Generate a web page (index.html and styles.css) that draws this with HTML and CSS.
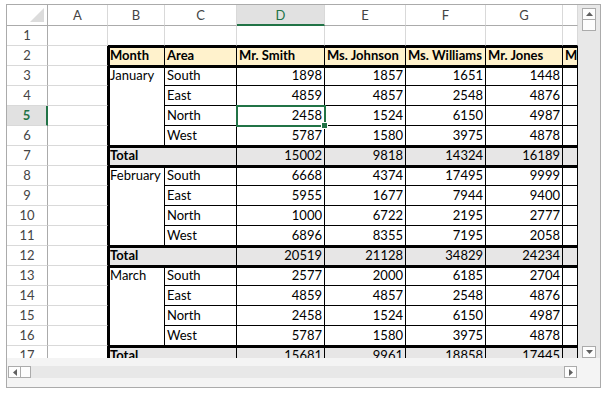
FILE: index.html
```html
<!DOCTYPE html>
<html>
<head>
<meta charset="utf-8">
<title>Sheet</title>
<link rel="stylesheet" href="styles.css">
</head>
<body>
<div class="frame">
  <div class="sheet">
    <div class="corner"><svg width="16" height="16" viewBox="0 0 16 16"><polygon points="15,1 15,15 1,15" fill="#dcdcdc"/></svg></div>
    <div class="ch">A</div><div class="ch">B</div><div class="ch">C</div><div class="ch sel">D</div><div class="ch">E</div><div class="ch">F</div><div class="ch">G</div><div class="ch"></div>

    <div class="rh">1</div><div></div><div class="ab"></div><div class="ab"></div><div class="ab"></div><div class="ab"></div><div class="ab"></div><div class="ab"></div><div class="ab"></div>

    <div class="rh">2</div><div class="lf"></div><div class="t hd tt tl">Month</div><div class="t hd tt">Area</div><div class="t hd tt">Mr. Smith</div><div class="t hd tt">Ms. Johnson</div><div class="t hd tt">Ms. Williams</div><div class="t hd tt">Mr. Jones</div><div class="t hd tt">M</div>

    <div class="rh">3</div><div class="lf"></div><div class="t tt tl m">January</div><div class="t tt">South</div><div class="t tt n">1898</div><div class="t tt n">1857</div><div class="t tt n">1651</div><div class="t tt n">1448</div><div class="t tt"></div>
    <div class="rh">4</div><div class="lf"></div><div class="t">East</div><div class="t n">4859</div><div class="t n">4857</div><div class="t n">2548</div><div class="t n">4876</div><div class="t"></div>
    <div class="rh sel">5</div><div class="lf"></div><div class="t">North</div><div class="t n cur">2458</div><div class="t n">1524</div><div class="t n">6150</div><div class="t n">4987</div><div class="t"></div>
    <div class="rh">6</div><div class="lf"></div><div class="t">West</div><div class="t n">5787</div><div class="t n">1580</div><div class="t n">3975</div><div class="t n">4878</div><div class="t"></div>
    <div class="rh">7</div><div class="lf"></div><div class="t tot tt tl span2 lbl">Total</div><div class="t tot tt n">15002</div><div class="t tot tt n">9818</div><div class="t tot tt n">14324</div><div class="t tot tt n">16189</div><div class="t tot tt"></div>

    <div class="rh">8</div><div class="lf"></div><div class="t tt tl m">February</div><div class="t tt">South</div><div class="t tt n">6668</div><div class="t tt n">4374</div><div class="t tt n">17495</div><div class="t tt n">9999</div><div class="t tt"></div>
    <div class="rh">9</div><div class="lf"></div><div class="t">East</div><div class="t n">5955</div><div class="t n">1677</div><div class="t n">7944</div><div class="t n">9400</div><div class="t"></div>
    <div class="rh">10</div><div class="lf"></div><div class="t">North</div><div class="t n">1000</div><div class="t n">6722</div><div class="t n">2195</div><div class="t n">2777</div><div class="t"></div>
    <div class="rh">11</div><div class="lf"></div><div class="t">West</div><div class="t n">6896</div><div class="t n">8355</div><div class="t n">7195</div><div class="t n">2058</div><div class="t"></div>
    <div class="rh">12</div><div class="lf"></div><div class="t tot tt tl span2 lbl">Total</div><div class="t tot tt n">20519</div><div class="t tot tt n">21128</div><div class="t tot tt n">34829</div><div class="t tot tt n">24234</div><div class="t tot tt"></div>

    <div class="rh">13</div><div class="lf"></div><div class="t tt tl m">March</div><div class="t tt">South</div><div class="t tt n">2577</div><div class="t tt n">2000</div><div class="t tt n">6185</div><div class="t tt n">2704</div><div class="t tt"></div>
    <div class="rh">14</div><div class="lf"></div><div class="t">East</div><div class="t n">4859</div><div class="t n">4857</div><div class="t n">2548</div><div class="t n">4876</div><div class="t"></div>
    <div class="rh">15</div><div class="lf"></div><div class="t">North</div><div class="t n">2458</div><div class="t n">1524</div><div class="t n">6150</div><div class="t n">4987</div><div class="t"></div>
    <div class="rh">16</div><div class="lf"></div><div class="t">West</div><div class="t n">5787</div><div class="t n">1580</div><div class="t n">3975</div><div class="t n">4878</div><div class="t"></div>
    <div class="rh">17</div><div class="lf"></div><div class="t tot tt tl span2 lbl">Total</div><div class="t tot tt n">15681</div><div class="t tot tt n">9961</div><div class="t tot tt n">18858</div><div class="t tot tt n">17445</div><div class="t tot tt"></div>
  </div>

  <div class="vscroll">
    <div class="btn"><svg width="7" height="4" viewBox="0 0 7 4"><polygon points="0,4 7,4 3.5,0" fill="#606060"/></svg></div>
    <div class="thumb v"></div>
    <div class="track"></div>
    <div class="btn"><svg width="7" height="4" viewBox="0 0 7 4"><polygon points="0,0 7,0 3.5,4" fill="#606060"/></svg></div>
  </div>

  <div class="hscroll">
    <div class="btn h"><svg width="4" height="7" viewBox="0 0 4 7"><polygon points="4,0 4,7 0,3.5" fill="#606060"/></svg></div>
    <div class="thumb hz"></div>
    <div class="track"></div>
    <div class="btn h"><svg width="4" height="7" viewBox="0 0 4 7"><polygon points="0,0 0,7 4,3.5" fill="#606060"/></svg></div>
  </div>
  <div class="sc-corner"></div>
</div>
</body>
</html>
```

FILE: styles.css
```css
html, body {
  margin: 0;
  background: #ffffff;
}

body {
  padding: 4px 0 0 6px;
  font-family: Lato, "Liberation Sans", sans-serif;
  font-size: 13px;
  color: #000;
}

.frame {
  width: 593px;
  height: 382px;
  border: 1px solid #ababab;
  display: grid;
  grid-template-columns: 571px 22px;
  grid-template-rows: 353px 29px;
  background: #f4f4f4;
}

.sheet {
  display: grid;
  grid-template-columns: 41px 60px 57px 72px 88px 81px 80px 77px 15px;
  grid-template-rows: 21px;
  grid-auto-rows: 20px;
  overflow: hidden;
  background: #fff;
}

.sheet > div {
  box-sizing: border-box;
  border-right: 1px solid #d9d9d9;
  border-bottom: 1px solid #d9d9d9;
  line-height: 18px;
  padding: 0 2px;
  white-space: nowrap;
  overflow: hidden;
}

.sheet > .corner {
  padding: 0;
  display: flex;
  align-items: flex-end;
  justify-content: flex-end;
  border-bottom-color: #ababab;
  border-right-color: #ababab;
}

.corner svg {
  display: block;
  margin: 0 2px 2px 0;
}

.sheet > .ch {
  text-align: center;
  color: #444;
  line-height: 20px;
  border-bottom-color: #ababab;
}

.sheet > .ch.sel {
  background: #e1e1e1;
  color: #217346;
  border-bottom: 2px solid #217346;
}

.sheet > .rh {
  text-align: center;
  color: #444;
  line-height: 19px;
  border-right-color: #ababab;
}

.sheet > .rh.sel {
  background: #e1e1e1;
  color: #217346;
  font-weight: bold;
  border-right: 2px solid #217346;
}

.sheet > .ab {
  border-bottom-color: #000;
}

.sheet > .lf {
  border-right-color: #000;
}

.sheet > .t {
  border-right-color: #000;
  border-bottom-color: #000;
}

.sheet > .hd {
  background: #fff2cc;
  font-weight: bold;
}

.sheet > .tot {
  background: #e7e6e6;
}

.sheet > .lbl {
  font-weight: bold;
}

.sheet > .n {
  text-align: right;
}

.sheet > .tt {
  box-shadow: inset 0 2px 0 #000;
}

.sheet > .tl {
  box-shadow: inset 2px 0 0 #000;
}

.sheet > .tt.tl {
  box-shadow: inset 2px 2px 0 #000;
}

.sheet > .m {
  grid-row: span 4;
}

.sheet > .span2 {
  grid-column: span 2;
}

.sheet > .cur {
  position: relative;
  overflow: visible;
  outline: 2px solid #217346;
  outline-offset: -1px;
  z-index: 2;
}

.cur::after {
  content: "";
  position: absolute;
  right: -4px;
  bottom: -4px;
  width: 5px;
  height: 5px;
  background: #217346;
  border: 1px solid #fff;
}

.vscroll {
  background: #e8e8e8;
  display: flex;
  flex-direction: column;
  align-items: center;
  padding-top: 3px;
}

.vscroll .track {
  flex: 1;
}

.btn {
  box-sizing: border-box;
  width: 14px;
  height: 12px;
  border: 1px solid #ababab;
  background: #fdfdfd;
  display: flex;
  align-items: center;
  justify-content: center;
}

.btn svg {
  display: block;
}

.thumb {
  box-sizing: border-box;
  background: #fdfdfd;
  border: 1px solid #ababab;
}

.thumb.v {
  width: 14px;
  height: 12px;
  margin-top: -1px;
}

.hscroll {
  display: flex;
  align-items: flex-start;
  padding: 8px 1px 0 1px;
  background: #f4f4f4;
}

.hscroll .track {
  flex: 1;
  height: 12px;
  background: #e8e8e8;
}

.btn.h {
  width: 13px;
  height: 12px;
}

.thumb.hz {
  width: 11px;
  height: 12px;
  margin-left: -1px;
}

.sc-corner {
  background: #f4f4f4;
}
```
